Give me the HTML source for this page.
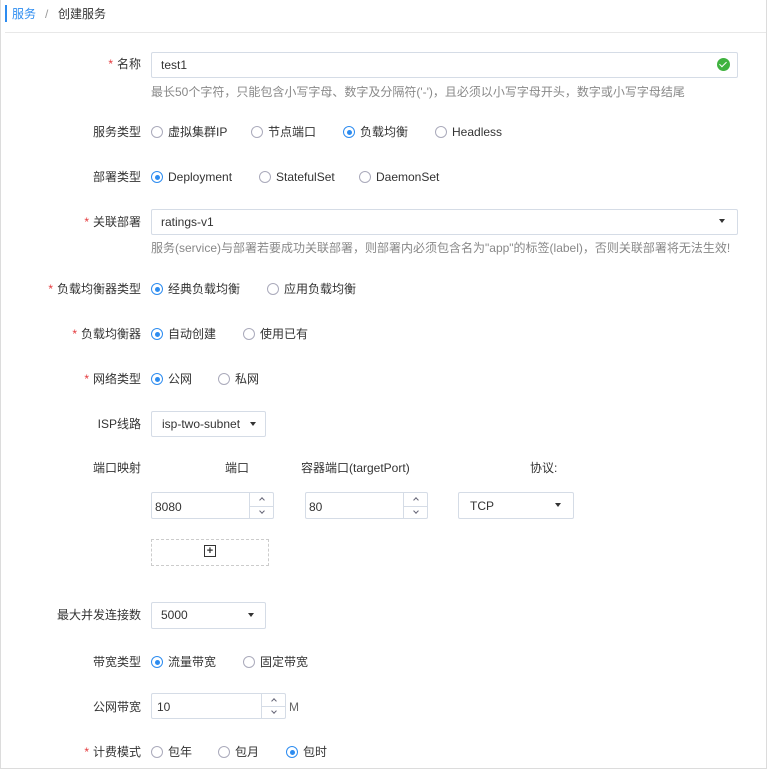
<!DOCTYPE html>
<html><head><meta charset="utf-8"><style>
*{box-sizing:border-box;margin:0;padding:0}
body{width:767px;height:769px;background:#fff;font-family:"Liberation Sans","Noto Sans CJK SC",sans-serif;font-size:12px;color:#333;position:relative;overflow:hidden}
.frame{position:absolute;left:0;top:0;width:767px;height:769px;border:1px solid #dcdcdc;border-top:none}
.a{position:absolute;white-space:nowrap;line-height:14px}
.lbl{position:absolute;right:626px;white-space:nowrap;line-height:14px;text-align:right}
.req{color:#e4393c;margin-right:4px}
.hint{color:#888}
.box{position:absolute;border:1px solid #d5dce6;border-radius:2px;background:#fff}
.r{position:absolute;width:12px;height:12px;border:1px solid #aab;border-radius:50%;background:#fff}
.r.on{border-color:#2d8cf0}
.r.on:after{content:"";position:absolute;left:2.5px;top:2.5px;width:5px;height:5px;border-radius:50%;background:#2d8cf0}
.tri{position:absolute;width:0;height:0;border-left:3px solid transparent;border-right:3px solid transparent;border-top:4px solid #333}
.sp{position:absolute;top:0;bottom:0;border-left:1px solid #d5dce6;width:24px}
.sp:before{content:"";position:absolute;left:0;right:0;top:50%;border-top:1px solid #d5dce6}
.sp i{position:absolute;left:10px;width:4px;height:4px;border-left:1px solid #667;border-top:1px solid #667}
</style></head><body>
<div class="frame"></div>
<div style="position:absolute;left:5px;top:5px;width:2px;height:17px;background:#2d8cf0"></div>
<div class="a" style="left:12px;top:7px;color:#2d8cf0">服务</div>
<div class="a" style="left:45px;top:7px;color:#999">/</div>
<div class="a" style="left:58px;top:7px">创建服务</div>
<div style="position:absolute;left:5px;right:1px;top:32px;border-top:1px solid #e8e8e8"></div>

<div class="lbl" style="top:57px"><span class="req">*</span>名称</div>
<div class="box" style="left:151px;top:52px;width:587px;height:26px"></div>
<div class="a" style="left:161px;top:58px">test1</div>
<div style="position:absolute;left:717px;top:58px;width:13px;height:13px;border-radius:50%;background:#3fb23f"></div>
<div style="position:absolute;left:721px;top:60px;width:4px;height:7px;border-right:1.5px solid #fff;border-bottom:1.5px solid #fff;transform:rotate(45deg)"></div>
<div class="a hint" style="left:151px;top:85px">最长50个字符，只能包含小写字母、数字及分隔符('-')，且必须以小写字母开头，数字或小写字母结尾</div>

<div class="lbl" style="top:125px">服务类型</div>
<div class="r" style="left:151px;top:126px"></div><div class="a" style="left:168px;top:125px">虚拟集群IP</div>
<div class="r" style="left:251px;top:126px"></div><div class="a" style="left:268px;top:125px">节点端口</div>
<div class="r on" style="left:343px;top:126px"></div><div class="a" style="left:360px;top:125px">负载均衡</div>
<div class="r" style="left:435px;top:126px"></div><div class="a" style="left:452px;top:125px">Headless</div>

<div class="lbl" style="top:170px">部署类型</div>
<div class="r on" style="left:151px;top:171px"></div><div class="a" style="left:168px;top:170px">Deployment</div>
<div class="r" style="left:259px;top:171px"></div><div class="a" style="left:276px;top:170px">StatefulSet</div>
<div class="r" style="left:359px;top:171px"></div><div class="a" style="left:376px;top:170px">DaemonSet</div>

<div class="lbl" style="top:215px"><span class="req">*</span>关联部署</div>
<div class="box" style="left:151px;top:209px;width:587px;height:26px"></div>
<div class="a" style="left:161px;top:215px">ratings-v1</div>
<div class="tri" style="left:719px;top:219px"></div>
<div class="a hint" style="left:151px;top:241px">服务(service)与部署若要成功关联部署，则部署内必须包含名为"app"的标签(label)，否则关联部署将无法生效!</div>

<div class="lbl" style="top:282px"><span class="req">*</span>负载均衡器类型</div>
<div class="r on" style="left:151px;top:283px"></div><div class="a" style="left:168px;top:282px">经典负载均衡</div>
<div class="r" style="left:267px;top:283px"></div><div class="a" style="left:284px;top:282px">应用负载均衡</div>

<div class="lbl" style="top:327px"><span class="req">*</span>负载均衡器</div>
<div class="r on" style="left:151px;top:328px"></div><div class="a" style="left:168px;top:327px">自动创建</div>
<div class="r" style="left:243px;top:328px"></div><div class="a" style="left:260px;top:327px">使用已有</div>

<div class="lbl" style="top:372px"><span class="req">*</span>网络类型</div>
<div class="r on" style="left:151px;top:373px"></div><div class="a" style="left:168px;top:372px">公网</div>
<div class="r" style="left:218px;top:373px"></div><div class="a" style="left:235px;top:372px">私网</div>

<div class="lbl" style="top:417px">ISP线路</div>
<div class="box" style="left:151px;top:411px;width:115px;height:26px"></div>
<div class="a" style="left:162px;top:417px">isp-two-subnet</div>
<div class="tri" style="left:250px;top:422px"></div>

<div class="lbl" style="top:461px">端口映射</div>
<div class="a" style="left:225px;top:461px">端口</div>
<div class="a" style="left:301px;top:461px">容器端口(targetPort)</div>
<div class="a" style="left:530px;top:461px">协议:</div>

<div class="box" style="left:151px;top:492px;width:123px;height:27px"><div class="sp" style="right:0"><i style="top:5px;transform:rotate(45deg)"></i><i style="top:16px;transform:rotate(225deg)"></i></div></div>
<div class="a" style="left:155px;top:500px">8080</div>
<div class="box" style="left:305px;top:492px;width:123px;height:27px"><div class="sp" style="right:0"><i style="top:5px;transform:rotate(45deg)"></i><i style="top:16px;transform:rotate(225deg)"></i></div></div>
<div class="a" style="left:309px;top:500px">80</div>
<div class="box" style="left:458px;top:492px;width:116px;height:27px"></div>
<div class="a" style="left:470px;top:499px">TCP</div>
<div class="tri" style="left:555px;top:503px"></div>

<div style="position:absolute;left:151px;top:539px;width:118px;height:27px;border:1px dashed #ccc"></div>
<div style="position:absolute;left:204px;top:545px;width:12px;height:12px;border:1px solid #333;font-size:11px;line-height:10px;text-align:center;font-weight:bold">+</div>

<div class="lbl" style="top:608px">最大并发连接数</div>
<div class="box" style="left:151px;top:602px;width:115px;height:27px"></div>
<div class="a" style="left:161px;top:608px">5000</div>
<div class="tri" style="left:248px;top:613px"></div>

<div class="lbl" style="top:655px">带宽类型</div>
<div class="r on" style="left:151px;top:656px"></div><div class="a" style="left:168px;top:655px">流量带宽</div>
<div class="r" style="left:243px;top:656px"></div><div class="a" style="left:260px;top:655px">固定带宽</div>

<div class="lbl" style="top:700px">公网带宽</div>
<div class="box" style="left:151px;top:693px;width:135px;height:26px"><div class="sp" style="right:0"><i style="top:5px;transform:rotate(45deg)"></i><i style="top:15px;transform:rotate(225deg)"></i></div></div>
<div class="a" style="left:157px;top:700px">10</div>
<div class="a" style="left:289px;top:700px;color:#666">M</div>

<div class="lbl" style="top:745px"><span class="req">*</span>计费模式</div>
<div class="r" style="left:151px;top:746px"></div><div class="a" style="left:168px;top:745px">包年</div>
<div class="r" style="left:218px;top:746px"></div><div class="a" style="left:235px;top:745px">包月</div>
<div class="r on" style="left:286px;top:746px"></div><div class="a" style="left:303px;top:745px">包时</div>
</body></html>
